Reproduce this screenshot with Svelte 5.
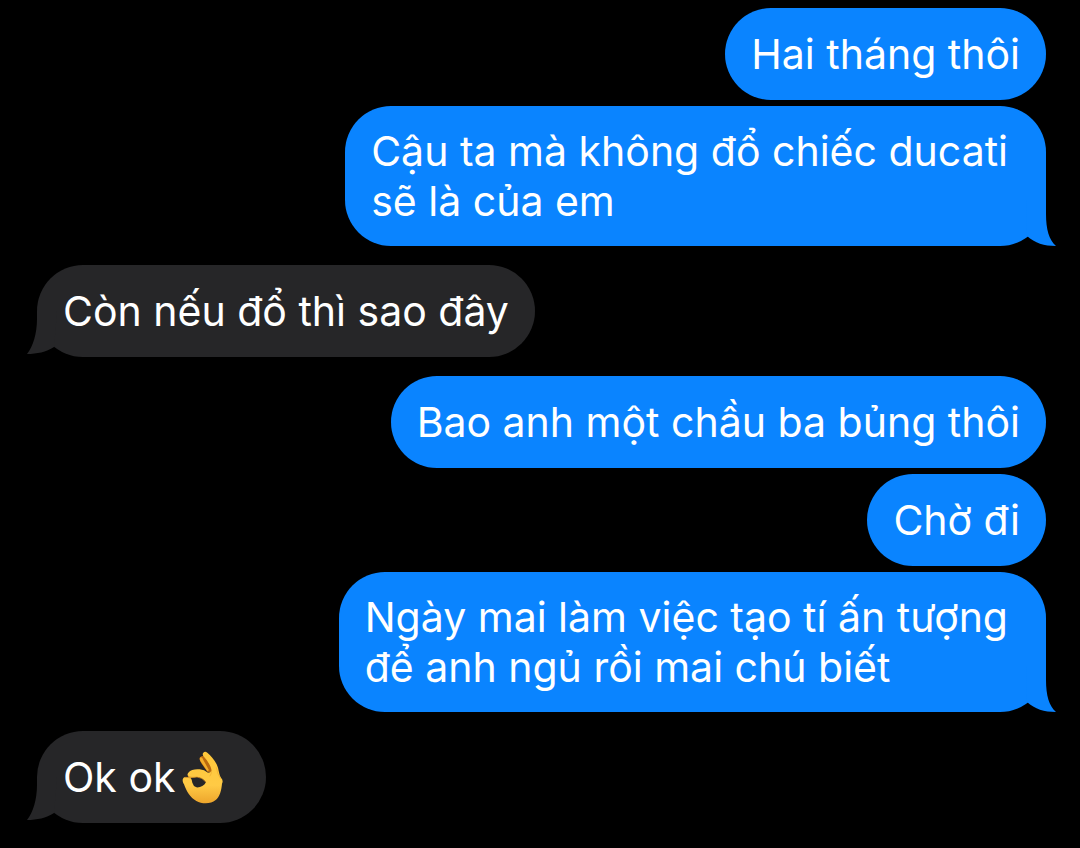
<script lang="ts">
	type Message = {
		from: 'me' | 'them';
		text: string;
		tail?: boolean;
		emoji?: 'ok-hand';
	};

	const messages: Message[] = [
		{ from: 'me', text: 'Hai tháng thôi' },
		{ from: 'me', text: 'Cậu ta mà không đổ chiếc ducati\nsẽ là của em', tail: true },
		{ from: 'them', text: 'Còn nếu đổ thì sao đây', tail: true },
		{ from: 'me', text: 'Bao anh một chầu ba bủng thôi' },
		{ from: 'me', text: 'Chờ đi' },
		{ from: 'me', text: 'Ngày mai làm việc tạo tí ấn tượng\nđể anh ngủ rồi mai chú biết', tail: true },
		{ from: 'them', text: 'Ok ok', emoji: 'ok-hand', tail: true }
	];
</script>

<main class="thread">
	{#each messages as message, i}
		<div
			class="bubble {message.from}"
			class:new-group={i > 0 && messages[i - 1].from !== message.from}
			class:wrapped={message.text.includes('\n')}
			class:with-emoji={message.emoji}
		>
			<p class="text">{message.text}</p>
			{#if message.emoji === 'ok-hand'}
				<svg class="emoji" viewBox="60 60 132 165" role="img" aria-label="OK hand">
					<defs>
						<linearGradient id="skin" x1="0" y1="0" x2="0" y2="1">
							<stop offset="0" stop-color="#ffc83a" />
							<stop offset="0.65" stop-color="#ffca45" />
							<stop offset="1" stop-color="#eda52c" />
						</linearGradient>
					</defs>
					<path
						d="M117 82 Q113 90 122 101 L140 127 L160 126 L150 94 Q143 77 132 78 Q122 76 117 82Z"
						fill="#b9690f"
					/>
					<path
						d="M119 82 Q113 86 120 96 L139 124 L144 121 L127 90 Q124 80 119 82Z"
						fill="#f2ad2b"
					/>
					<path
						fill="url(#skin)"
						d="M127 68 Q132 63 139 68 C151 78 165 94 171 113 C174 125 175 135 180 143 Q188 151 183 161 C181 181 177 200 163 211 C151 222 123 223 106 213 C88 203 76 184 69 163 C63 153 64 145 70 142 L84 142 C79 137 78 132 82 128 C89 118 104 117 116 118 Q130 119 141 128 Q148 128 152 122 C149 106 139 92 130 82 Q122 74 127 68Z"
					/>
					<path
						d="M89 143 Q100 143 108 141 Q124 142 135 157 C129 168 118 173 106 172 Q97 169 94 158 Q93 149 89 143Z"
						fill="#262628"
					/>
					<path
						d="M72 142 Q84 141 90 145 M82 138 Q86 144 108 141 Q124 142 135 157"
						fill="none"
						stroke="#d98d20"
						stroke-width="2"
					/>
					<path
						d="M152 122 Q152 132 147 138 M166 113 Q169 133 178 145"
						fill="none"
						stroke="#eeaa30"
						stroke-width="2"
						stroke-linecap="round"
					/>
				</svg>
			{/if}
			{#if message.tail}
				<svg class="tail" viewBox="0 0 40 46" aria-hidden="true">
					{#if message.from === 'me'}
						<path d="M10 0 H30 V14 C30 29 33 40 40 46 C28 46 19 43 11 36 Z" />
					{:else}
						<path d="M30 0 H10 V8 C10 22 6 36 0 43 C10 43 19 41 27 36 Z" />
					{/if}
				</svg>
			{/if}
		</div>
	{/each}
</main>

<style>
	:global(body) {
		margin: 0;
		background: #000;
	}

	.thread {
		display: flex;
		flex-direction: column;
		gap: 6px;
		padding: 8px 34px 25px 37px;
		color: #fff;
		font-family: Inter, 'Noto Sans', sans-serif;
		font-size: 41px;
		line-height: 50px;
	}

	.bubble {
		position: relative;
		display: flex;
		align-items: center;
		box-sizing: border-box;
		min-height: 92px;
		padding: 20px 26px;
		border-radius: 46px;
	}

	.me {
		align-self: flex-end;
		background: #0a84ff;
		fill: #0a84ff;
	}

	.them {
		align-self: flex-start;
		background: #262628;
		fill: #262628;
	}

	/* Extra space when the sender changes */
	.new-group {
		margin-top: 13px;
	}

	.wrapped,
	.with-emoji {
		padding-right: 38px;
	}

	.text {
		margin: 0;
		white-space: pre-line;
	}

	/* Taller than the line, so it must not stretch the bubble */
	.emoji {
		flex: none;
		width: 44px;
		height: 55px;
		margin: -4px 3px -4px 6px;
	}

	.tail {
		position: absolute;
		bottom: 0;
		width: 40px;
		height: 46px;
	}

	.me .tail {
		right: -10px;
	}

	.them .tail {
		left: -10px;
	}
</style>
